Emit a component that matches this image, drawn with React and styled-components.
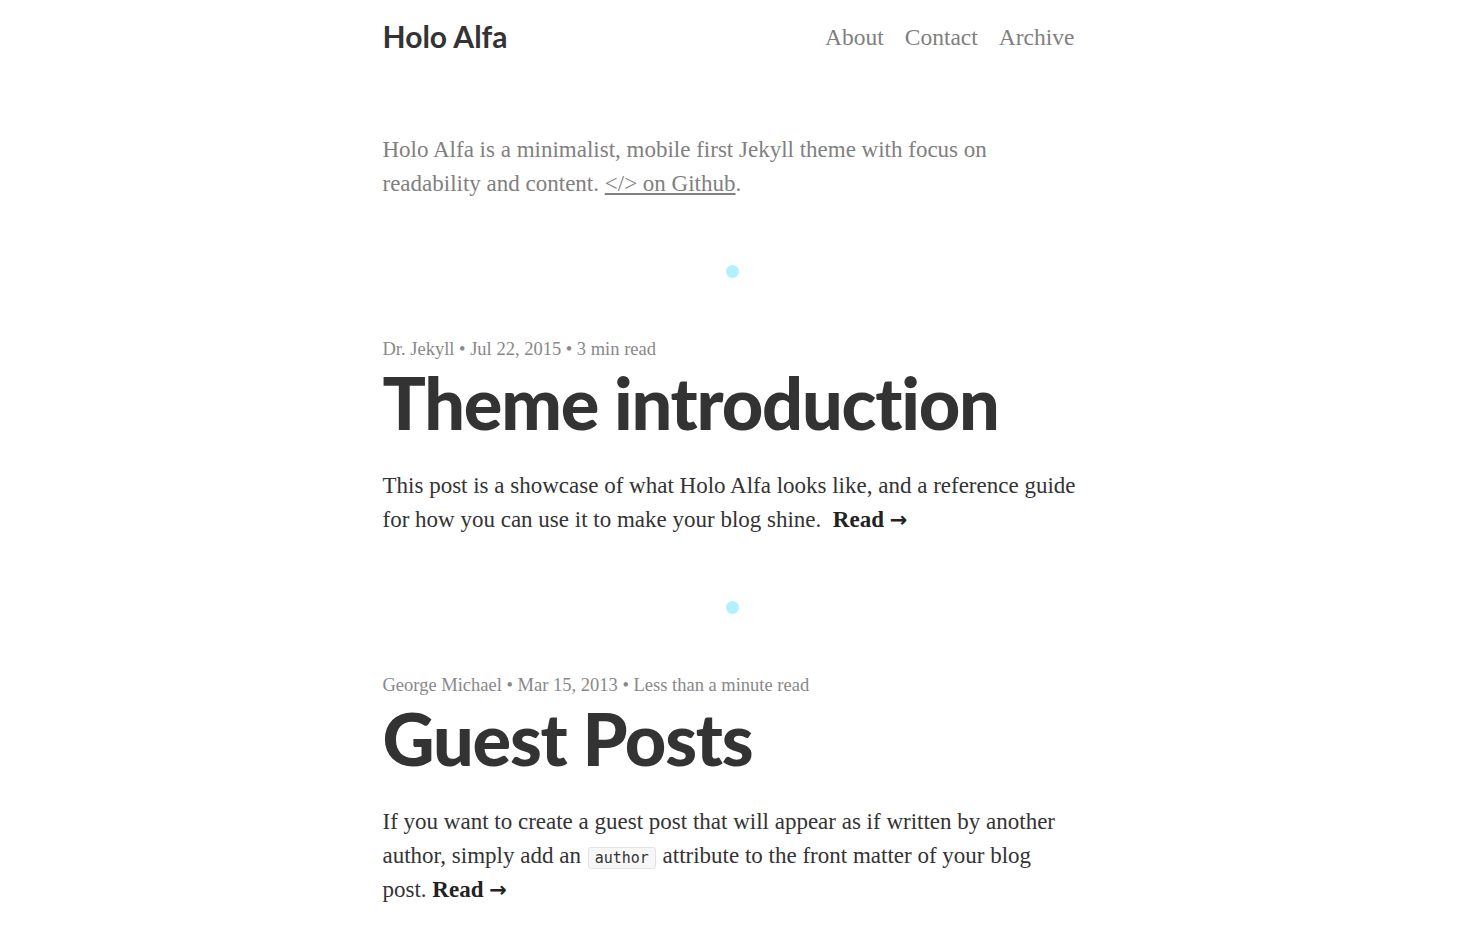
import React from "react"
import styled, { createGlobalStyle } from "styled-components"

const GlobalStyle = createGlobalStyle`
  body {
    margin: 0;
    background: #fff;
    font-family: "Liberation Serif", "DejaVu Serif", serif;
    color: #333;
  }
`

const Page = styled.div`
  max-width: 700px;
  margin: 0 auto;
  padding-bottom: 40px;
`

const Header = styled.header`
  display: flex;
  justify-content: space-between;
  align-items: center;
  height: 72px;
`

const Brand = styled.a`
  font-family: Lato, "Open Sans", sans-serif;
  font-weight: 700;
  font-size: 30px;
  color: #333;
  text-decoration: none;
`

const Nav = styled.nav`
  display: flex;
  gap: 21px;
  padding: 3px 8px 0 0;

  & a {
    font-size: 23.5px;
    color: #808080;
    text-decoration: none;
  }
`

const Intro = styled.p`
  margin: 61px 0 0;
  font-size: 23px;
  line-height: 34px;
  color: #808080;

  & a {
    color: #808080;
  }
`

const Dot = styled.div`
  width: 13px;
  height: 13px;
  border-radius: 50%;
  background: #b0f0ff;
  margin: ${(p) => p.top}px auto 0;
`

const Post = styled.article`
  margin-top: 59px;
`

const Meta = styled.div`
  font-size: 18.5px;
  line-height: 24px;
  color: #888;
`

const Title = styled.h1`
  font-family: Lato, "Open Sans", sans-serif;
  font-weight: 900;
  font-size: 72px;
  line-height: 80px;
  letter-spacing: -1.2px;
  color: #333;
  margin: 1px 0 0;
`

const Excerpt = styled.p`
  margin: 27px 0 0;
  padding-right: 4px;
  font-size: 23px;
  line-height: 34px;
  color: #333;
`

const ReadLink = styled.a`
  font-weight: 700;
  color: #222;
  text-decoration: none;
`

const Arrow = styled.span`
  font-family: "DejaVu Sans", sans-serif;
  font-size: 21px;
`

const Code = styled.code`
  font-family: "DejaVu Sans Mono", "Liberation Mono", monospace;
  font-size: 15px;
  line-height: 1;
  color: #333;
  background: #f7f7f7;
  border: 1px solid #e3e3e3;
  border-radius: 3px;
  padding: 1px 6px;
  margin: 0 1px;
`

const posts = [
  {
    meta: "Dr. Jekyll • Jul 22, 2015 • 3 min read",
    title: "Theme introduction",
    body: (
      <>
        This post is a showcase of what Holo Alfa looks like, and a reference
        guide for how you can use it to make your blog shine.&nbsp;{" "}
      </>
    ),
  },
  {
    meta: "George Michael • Mar 15, 2013 • Less than a minute read",
    title: "Guest Posts",
    body: (
      <>
        If you want to create a guest post that will appear as if written by
        another author, simply add an <Code>author</Code> attribute to the front
        matter of your blog post.{" "}
      </>
    ),
  },
]

export default function App() {
  return (
    <Page>
      <GlobalStyle />
      <Header>
        <Brand href="#">Holo Alfa</Brand>
        <Nav>
          <a href="#">About</a>
          <a href="#">Contact</a>
          <a href="#">Archive</a>
        </Nav>
      </Header>
      <Intro>
        Holo Alfa is a minimalist, mobile first Jekyll theme with focus on
        readability and content. <a href="#">&lt;/&gt; on Github</a>.
      </Intro>
      {posts.map((post) => (
        <React.Fragment key={post.title}>
          <Dot top={64} />
          <Post>
            <Meta>{post.meta}</Meta>
            <Title>{post.title}</Title>
            <Excerpt>
              {post.body}
              <ReadLink href="#">
                Read <Arrow>→</Arrow>
              </ReadLink>
            </Excerpt>
          </Post>
        </React.Fragment>
      ))}
    </Page>
  )
}
